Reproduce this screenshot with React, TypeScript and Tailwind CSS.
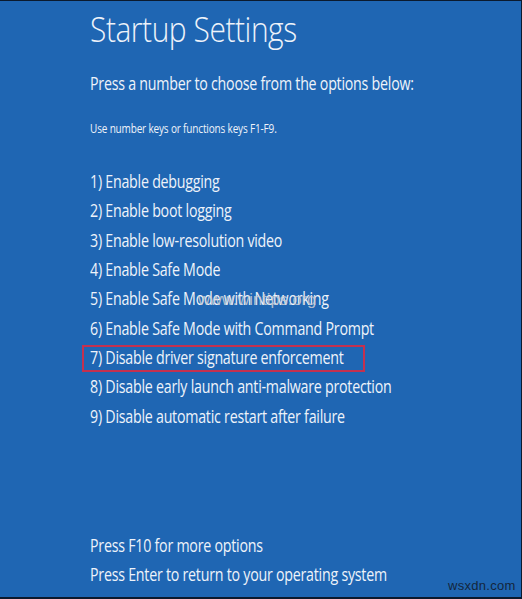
const OPTIONS = [
  '1) Enable debugging',
  '2) Enable boot logging',
  '3) Enable low-resolution video',
  '4) Enable Safe Mode',
  '5) Enable Safe Mode with Networking',
  '6) Enable Safe Mode with Command Prompt',
  '7) Disable driver signature enforcement',
  '8) Disable early launch anti-malware protection',
  '9) Disable automatic restart after failure',
];

// Segoe-like text: Open Sans squeezed horizontally
const line = 'block origin-left scale-x-[0.79] whitespace-nowrap text-[18px] tracking-[-0.3px]';

export default function App() {
  return (
    <div
      className="relative w-[522px] h-[599px] overflow-hidden bg-[#1f66b3] text-[#eef3fa] border-t border-r border-b-2 border-[#0b1a2e]"
      style={{ fontFamily: "'Open Sans', 'Noto Sans', sans-serif" }}
    >
      <div className="flex flex-col h-full pl-[90px] pt-[4px] pb-[8px]">
        {/* Title */}
        <h1 className="origin-left scale-x-[0.88] whitespace-nowrap text-[34px] font-light leading-[48px] tracking-[-0.5px]">
          Startup Settings
        </h1>

        <p className={`mt-[18px] leading-[24px] ${line}`}>Press a number to choose from the options below:</p>
        <p className="mt-[26px] origin-left scale-x-[0.80] whitespace-nowrap text-[12.5px] leading-[16px] tracking-[-0.2px]">
          Use number keys or functions keys F1-F9.
        </p>

        {/* Options */}
        <ul className="mt-[30px] flex flex-col">
          {OPTIONS.map((opt, i) => (
            <li key={opt} className="relative h-[29.3px] flex items-center">
              {i === 6 && (
                <span className="absolute left-[-8px] top-[2px] w-[283px] h-[27px] border-2 border-[#c4314f]" />
              )}
              <span className={line}>{opt}</span>
            </li>
          ))}
        </ul>

        {/* Footer */}
        <div className="mt-auto flex flex-col">
          <p className={`h-[29px] flex items-center ${line}`}>Press F10 for more options</p>
          <p className={`h-[29px] flex items-center ${line}`}>Press Enter to return to your operating system</p>
        </div>
      </div>

      {/* watermarks */}
      <span
        className="absolute left-[198px] top-[288px] text-[16.5px] leading-[20px] text-[#c3cad4]/90"
        style={{ fontFamily: "'Liberation Sans', sans-serif" }}
      >
        www.wintips.org
      </span>
      <span
        className="absolute left-[448px] bottom-[2px] text-[13px] tracking-[0.3px] text-[#14263d]"
        style={{ fontFamily: "'Liberation Sans', sans-serif" }}
      >
        wsxdn.com
      </span>
    </div>
  );
}
